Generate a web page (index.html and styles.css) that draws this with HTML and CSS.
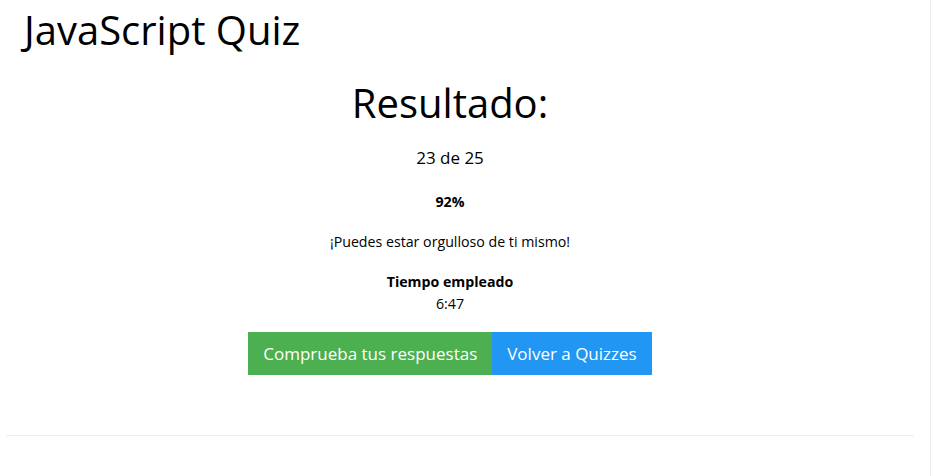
FILE: index.html
```html
<!DOCTYPE html>
<html lang="es">
<head>
<meta charset="utf-8">
<title>JavaScript Quiz</title>
<link rel="stylesheet" href="styles.css">
</head>
<body>
<div class="page">
  <header class="topbar">
    <h1 class="title">JavaScript Quiz</h1>
  </header>
  <main class="result">
    <h2 class="result-heading">Resultado:</h2>
    <p class="score">23 de 25</p>
    <p class="percent">92%</p>
    <p class="message">¡Puedes estar orgulloso de ti mismo!</p>
    <div class="time">
      <strong class="time-label">Tiempo empleado</strong>
      <span class="time-value">6:47</span>
    </div>
    <div class="actions">
      <a class="btn btn-green" href="#">Comprueba tus respuestas</a>
      <a class="btn btn-blue" href="#">Volver a Quizzes</a>
    </div>
  </main>
  <hr class="divider">
</div>
</body>
</html>
```
FILE: styles.css
```css
* { box-sizing: border-box; }
html, body { margin: 0; padding: 0; background: #fff; }
body {
  font-family: "Open Sans", "Noto Sans", sans-serif;
  font-size: 14.2px;
  line-height: 1.5;
  color: #000;
}
.page {
  width: 931px;
  min-height: 476px;
  border-right: 1px solid #ececec;
  display: flex;
  flex-direction: column;
}
.topbar { padding: 5px 0 0 24px; }
.title {
  margin: 0;
  font-weight: 400;
  font-size: 40px;
  line-height: 50px;
}
.result {
  width: 900px;
  display: flex;
  flex-direction: column;
  align-items: center;
  text-align: center;
}
.result-heading {
  margin: 18px 0 0;
  font-weight: 400;
  font-size: 40px;
  line-height: 60px;
}
.score { margin: 11px 0 0; font-size: 17px; line-height: 27px; }
.percent { margin: 20px 0 0; font-weight: 700; line-height: 22px; }
.message { margin: 18px 0 0; line-height: 22px; }
.time { margin: 18px 0 0; display: flex; flex-direction: column; align-items: center; }
.time-label { font-weight: 700; line-height: 22px; }
.time-value { line-height: 21px; }
.actions { margin-top: 18px; display: flex; }
.btn {
  display: block;
  padding: 8px 15px;
  font-size: 17px;
  line-height: 27px;
  color: #fff;
  text-decoration: none;
}
.btn-green { background: #4caf50; }
.btn-blue { background: #2196f3; }
.divider {
  margin: auto 16px 40px 6px;
  border: 0;
  border-top: 1px solid #eee;
  height: 0;
}
```
